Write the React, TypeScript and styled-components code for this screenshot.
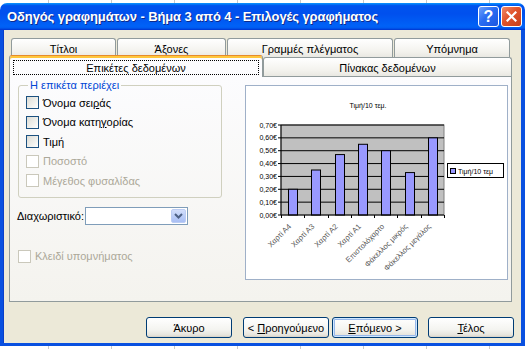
import React from 'react';
import styled, { createGlobalStyle, css } from 'styled-components';

const GlobalStyle = createGlobalStyle`
  html, body {
    margin: 0;
    padding: 0;
  }
  body {
    width: 528px;
    height: 349px;
    overflow: hidden;
    background-color: #fff;
    background-image: repeating-linear-gradient(to right, transparent 0 48px, #c9c9c9 48px 49px, transparent 49px 63px);
    font-family: 'Liberation Sans', Arial, sans-serif;
    font-size: 11px;
    color: #000;
  }
`;

const Window = styled.div`
  width: 525px;
  margin-top: 3px;
  display: flex;
  flex-direction: column;
`;

const TitleBar = styled.div`
  height: 27px;
  box-sizing: border-box;
  border-radius: 7px 7px 0 0;
  background: linear-gradient(to bottom, #0997ff 0%, #0053ee 10%, #0050ee 40%, #0062f7 85%, #005bf0 93%, #003dd7 97%, #003dd7 100%);
  display: flex;
  align-items: center;
  padding: 0 3px 0 7px;
`;

const TitleText = styled.div`
  flex: 1;
  color: #fff;
  font-weight: bold;
  font-size: 13px;
  letter-spacing: -0.1px;
  text-shadow: 1px 1px 0 #0f2a8a;
  white-space: nowrap;
`;

const CaptionButtons = styled.div`
  display: flex;
  gap: 2px;
`;

const CaptionButton = styled.div<{ $close?: boolean }>`
  width: 21px;
  height: 21px;
  box-sizing: border-box;
  border: 1px solid #fff;
  border-radius: 3px;
  display: flex;
  align-items: center;
  justify-content: center;
  color: #fff;
  font-weight: bold;
  font-size: 16px;
  background: ${p => (p.$close
    ? 'linear-gradient(135deg, #f08a69 0%, #e0532b 45%, #c8401b 100%)'
    : 'linear-gradient(135deg, #6ea1fa 0%, #2a6cf2 45%, #1b56e0 100%)')};
`;

const Frame = styled.div`
  background: #ece9d8;
  border-style: solid;
  border-color: #0950e0;
  border-width: 0 4px 3px 3px;
  box-shadow: inset 1px 0 #0a3fc9;
  padding: 8px 9px 5px 6px;
  display: flex;
  flex-direction: column;
`;

const TabRow = styled.div<{ $inset: number; $gap: number }>`
  display: flex;
  align-items: flex-start;
  padding-left: ${p => p.$inset}px;
  gap: ${p => p.$gap}px;
`;

const Tab = styled.div<{ $w: number; $selected?: boolean }>`
  width: ${p => p.$w}px;
  height: 19px;
  box-sizing: border-box;
  border: 1px solid #919b9c;
  border-bottom: none;
  border-radius: 3px 3px 0 0;
  background: linear-gradient(#ffffff, #f3f2ed 70%, #e9e8e2);
  display: flex;
  align-items: center;
  justify-content: center;
  padding-top: 1px;
  ${p => p.$selected && css`
    height: 22px;
    margin-top: -2px;
    margin-bottom: -1px;
    position: relative;
    z-index: 1;
    background: #fcfcfe;
    border-top: 1px solid #e68b2c;
    box-shadow: inset 0 2px 0 #ffc73c;
    padding-top: 2px;
  `}
`;

const FocusRect = styled.span`
  flex: 1;
  margin: 0 3px;
  height: 15px;
  box-sizing: border-box;
  border: 1px dotted #000;
  display: flex;
  align-items: center;
  justify-content: center;
`;

const Panel = styled.div`
  height: 226px;
  box-sizing: border-box;
  border: 1px solid #919b9c;
  background: linear-gradient(#fcfcfe, #f4f3ee);
  display: grid;
  grid-template-columns: 1fr 263px;
  padding-right: 3px;
`;

const LeftColumn = styled.div`
  display: flex;
  flex-direction: column;
  align-items: flex-start;
  padding: 2px 0 0 8px;
`;

const GroupBox = styled.fieldset`
  width: 204px;
  box-sizing: border-box;
  margin: 0;
  border: 1px solid #d0d0bf;
  border-radius: 3px;
  padding: 1px 0 6px 7px;
`;

const GroupLegend = styled.legend`
  color: #0046d5;
  padding: 0 2px;
  margin-left: 2px;
  line-height: 13px;
`;

const CheckRow = styled.div<{ $disabled?: boolean }>`
  display: flex;
  align-items: center;
  gap: 4px;
  height: 19.5px;
  color: ${p => (p.$disabled ? '#aca899' : '#000')};
`;

const CheckBox = styled.span<{ $disabled?: boolean }>`
  width: 13px;
  height: 13px;
  box-sizing: border-box;
  flex: none;
  border: 1px solid ${p => (p.$disabled ? '#cac8bb' : '#1c5180')};
  background: ${p => (p.$disabled ? '#fff' : 'linear-gradient(135deg, #dcdcd5 0%, #f4f4f1 70%, #fff 100%)')};
`;

const SeparatorRow = styled.div`
  display: flex;
  align-items: center;
  height: 18px;
  margin: 9px 0 0 -1px;
`;

const Combo = styled.div`
  width: 103px;
  height: 18px;
  margin-left: 1px;
  box-sizing: border-box;
  border: 1px solid #7f9db9;
  background: #fff;
  display: flex;
  justify-content: flex-end;
  align-items: center;
  padding: 1px;
`;

const ComboButton = styled.span`
  width: 15px;
  height: 14px;
  box-sizing: border-box;
  border: 1px solid #bccdf4;
  border-radius: 2px;
  background: linear-gradient(#d2defb, #b8cbf7 60%, #a9bff4);
  display: flex;
  align-items: center;
  justify-content: center;
`;

const LegendKeyRow = styled(CheckRow)`
  margin-top: 22px;
`;

const ChartBox = styled.div`
  margin-top: 8px;
  width: 263px;
  height: 195px;
  box-sizing: border-box;
  border: 1px solid #9fb0c8;
  background: #fff;
`;

const ButtonRow = styled.div`
  display: flex;
  justify-content: flex-end;
  margin: 15px -2px 0 0;
`;

const Button = styled.button<{ $gapLeft: number; $default?: boolean }>`
  width: 86px;
  height: 21px;
  margin-left: ${p => p.$gapLeft}px;
  box-sizing: border-box;
  border: 1px solid #003c74;
  border-radius: 3px;
  background: linear-gradient(#ffffff, #f4f4f0 60%, #e6e4dc 90%, #d6d0c5);
  font-family: inherit;
  font-size: 11px;
  color: #000;
  padding: 0;
  ${p => p.$default && css`
    box-shadow: inset 0 0 0 1px #cee7ff, inset 0 0 0 2px #98b8ea;
  `}
`;

const labels = ['Χαρτί Α4', 'Χαρτί Α3', 'Χαρτί Α2', 'Χαρτί Α1', 'Επιστολόχαρτο', 'Φάκελλος μικρός', 'Φάκελλος μεγάλος'];
const values = [0.2, 0.35, 0.47, 0.55, 0.5, 0.33, 0.6];

const Chart: React.FC = () => {
  const left = 35;
  const right = 198;
  const top = 39;
  const bottom = 129;
  const step = (bottom - top) / 7;
  const cat = (right - left) / labels.length;
  const chartFont = { fontFamily: 'Liberation Sans, Arial, sans-serif', fontSize: 7 };

  return (
    <svg width="261" height="193" viewBox="0 0 261 193" style={chartFont}>
      <text x="122" y="22" textAnchor="middle">Τιμή/10 τεμ.</text>
      <rect x={left} y={top} width={right - left} height={bottom - top} fill="#c0c0c0" stroke="#808080" />
      {Array.from({ length: 8 }, (_, i) => {
        const y = bottom - i * step;
        return (
          <g key={i}>
            {i > 0 && <line x1={left} x2={right} y1={y} y2={y} stroke="#000" />}
            <line x1={left - 3} x2={left} y1={y} y2={y} stroke="#000" />
            <text x={left - 4} y={y + 2.5} textAnchor="end">{`0,${i}0€`}</text>
          </g>
        );
      })}
      {values.map((v, i) => {
        const cx = left + cat * (i + 0.5);
        const h = (v / 0.1) * step;
        return (
          <rect key={i} x={Math.round(cx - 4.5) + 0.5} y={bottom - h} width={9} height={h} fill="#9999ff" stroke="#000" />
        );
      })}
      <line x1={left} x2={left} y1={top} y2={bottom} stroke="#000" />
      <line x1={left} x2={right} y1={bottom} y2={bottom} stroke="#000" />
      {Array.from({ length: labels.length + 1 }, (_, i) => {
        const x = Math.round(left + cat * i) + 0.5;
        return <line key={i} x1={x} x2={x} y1={bottom} y2={bottom + 3} stroke="#000" />;
      })}
      {labels.map((l, i) => {
        const cx = left + cat * (i + 0.5) - 1;
        const y = 141;
        return (
          <text key={l} x={cx} y={y} textAnchor="end" fill="#555" fontSize="7.6" transform={`rotate(-45 ${cx} ${y})`}>{l}</text>
        );
      })}
      <rect x="201.5" y="77.5" width="56" height="14" fill="#fff" stroke="#000" />
      <rect x="204.5" y="82.5" width="5" height="5" fill="#9999ff" stroke="#000" />
      <text x="212" y="87.5">Τιμή/10 τεμ</text>
    </svg>
  );
};

const App: React.FC = () => {
  return (
    <>
      <GlobalStyle />
      <Window>
        <TitleBar>
          <TitleText>Οδηγός γραφημάτων - Βήμα 3 από 4 - Επιλογές γραφήματος</TitleText>
          <CaptionButtons>
            <CaptionButton>?</CaptionButton>
            <CaptionButton $close>
              <svg width="11" height="11" viewBox="0 0 11 11">
                <path d="M1.5 1.5 L9.5 9.5 M9.5 1.5 L1.5 9.5" stroke="#fff" strokeWidth="2.2" strokeLinecap="square" />
              </svg>
            </CaptionButton>
          </CaptionButtons>
        </TitleBar>
        <Frame>
          <TabRow $inset={2} $gap={1}>
            <Tab $w={105}>Τίτλοι</Tab>
            <Tab $w={109}>Άξονες</Tab>
            <Tab $w={166}>Γραμμές πλέγματος</Tab>
            <Tab $w={116}>Υπόμνημα</Tab>
          </TabRow>
          <TabRow $inset={0} $gap={0}>
            <Tab $w={254} $selected>
              <FocusRect>Επικέτες δεδομένων</FocusRect>
            </Tab>
            <Tab $w={249}>Πίνακας δεδομένων</Tab>
          </TabRow>
          <Panel>
            <LeftColumn>
              <GroupBox>
                <GroupLegend>Η επικέτα περιέχει</GroupLegend>
                <CheckRow>
                  <CheckBox />
                  <span>Όνομα σει<u>ρ</u>άς</span>
                </CheckRow>
                <CheckRow>
                  <CheckBox />
                  <span>Όνομα κατη<u>γ</u>ορίας</span>
                </CheckRow>
                <CheckRow>
                  <CheckBox />
                  <span>Τιμή</span>
                </CheckRow>
                <CheckRow $disabled>
                  <CheckBox $disabled />
                  <span>Ποσοστό</span>
                </CheckRow>
                <CheckRow $disabled>
                  <CheckBox $disabled />
                  <span>Μέγεθος φυσαλίδας</span>
                </CheckRow>
              </GroupBox>
              <SeparatorRow>
                <span>Δια<u>χ</u>ωριστικό:</span>
                <Combo>
                  <ComboButton>
                    <svg width="9" height="6" viewBox="0 0 9 6">
                      <path d="M1 1 L4.5 4.5 L8 1" fill="none" stroke="#4d6185" strokeWidth="2" />
                    </svg>
                  </ComboButton>
                </Combo>
              </SeparatorRow>
              <LegendKeyRow $disabled>
                <CheckBox $disabled />
                <span>Κλειδί υπομνήματος</span>
              </LegendKeyRow>
            </LeftColumn>
            <ChartBox>
              <Chart />
            </ChartBox>
          </Panel>
          <ButtonRow>
            <Button $gapLeft={0}>Άκυρο</Button>
            <Button $gapLeft={11}>&lt; <u>Π</u>ροηγούμενο</Button>
            <Button $gapLeft={3} $default><u>Ε</u>πόμενο &gt;</Button>
            <Button $gapLeft={10}><u>Τ</u>έλος</Button>
          </ButtonRow>
        </Frame>
      </Window>
    </>
  );
};

export default App;
